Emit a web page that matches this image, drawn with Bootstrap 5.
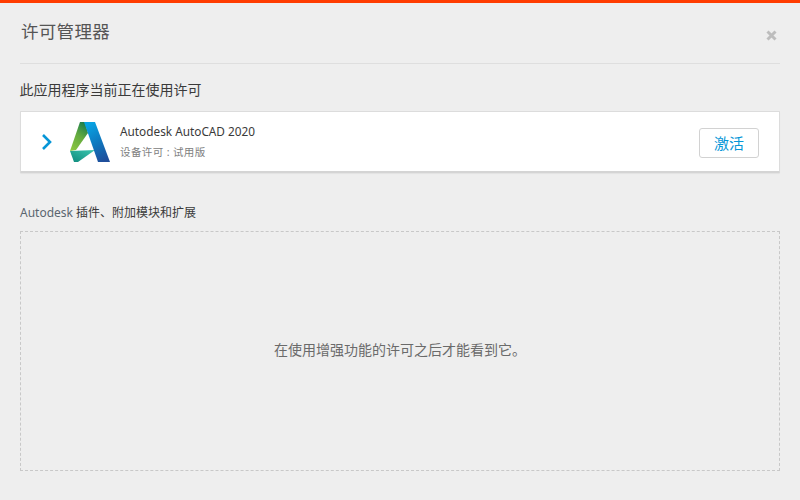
<!DOCTYPE html>
<html lang="zh">
<head>
<meta charset="utf-8">
<title>许可管理器</title>
<link href="https://cdn.jsdelivr.net/npm/bootstrap@5.3.0/dist/css/bootstrap.min.css" rel="stylesheet">
<style>
html,body{height:100%}
body{background:#eee;font-family:"Noto Sans","Noto Sans CJK SC",sans-serif;color:#3c3c3c;border-top:3px solid #ff3c00;overflow:hidden}
.shell{padding:0 20px;height:497px}
.head{height:61px;border-bottom:1px solid #dedede;padding-left:1px}
.ttl{font-size:17.5px;line-height:24px;margin:16px 0 0;font-weight:400;color:#555;letter-spacing:.3px}
.closer{width:11px;height:11px;margin:26px 3px 0 0;display:block;background:none;border:0;padding:0;margin-top:19px}
.sec{font-size:14px;line-height:20px;margin:0;font-weight:400;color:#3a3a3a}
.sec1{margin-top:16px;margin-left:-.5px}
.lic{height:62px;margin-top:11px;background:#fff;border:1px solid #dcdcdc;border-bottom:2px solid #d4d4d4;box-shadow:0 1px 1px rgba(0,0,0,.05);border-radius:1px}
.chev{width:12px;height:18px;margin-left:20px;margin-right:17px}
.logo{width:40px;height:40px;margin-right:10px}
.nm{font-size:11.8px;line-height:16px;color:#3a3a3a;margin-top:-2px}
.sb{font-size:10.5px;line-height:14px;color:#808080;margin-top:6px;letter-spacing:.38px}
.act{width:60px;height:30px;margin:2px 20px 0 0;padding:0;font-size:15px;line-height:28px;color:#0696d7;background:#fff;border:1px solid #d2d2d2;border-radius:3px}
.sec2{margin-top:31px;font-size:12px;line-height:18px}
.adsk{color:#5b6670}
.drop{height:240px;margin-top:9px;border:1px dashed #c8c8c8;font-size:14px;color:#6a6a6a;padding-bottom:4px}
</style>
</head>
<body>
<div class="shell">
  <div class="head d-flex justify-content-between align-items-start">
    <h1 class="ttl">许可管理器</h1>
    <button class="closer" type="button" aria-label="关闭">
      <svg width="11" height="11" viewBox="0 0 11 11"><path d="M1.5 1.5l8 8M9.5 1.5l-8 8" stroke="#bdbdbd" stroke-width="3"/></svg>
    </button>
  </div>
  <h2 class="sec sec1">此应用程序当前正在使用许可</h2>
  <div class="lic d-flex align-items-center">
    <svg class="chev flex-shrink-0" viewBox="0 0 12 18"><path d="M2 2l7 7-7 7" fill="none" stroke="#0696d7" stroke-width="2.6"/></svg>
    <svg class="logo flex-shrink-0" viewBox="0 0 40 40">
      <defs>
        <linearGradient id="g1" x1="0.2" y1="1" x2="0.7" y2="0"><stop offset="0" stop-color="#8cc63f"/><stop offset=".55" stop-color="#62a93f"/><stop offset="1" stop-color="#1d7f4d"/></linearGradient>
        <linearGradient id="g2" x1="0.3" y1="0" x2="0.7" y2="1"><stop offset="0" stop-color="#08a4e4"/><stop offset=".55" stop-color="#0f75bc"/><stop offset="1" stop-color="#1f4e9b"/></linearGradient>
        <linearGradient id="g3" x1="1" y1="0" x2="0" y2="1"><stop offset="0" stop-color="#3cc7b0"/><stop offset="1" stop-color="#0f8a7c"/></linearGradient>
      </defs>
      <path d="M10 0H15L18 11L6 28L0 29Z" fill="url(#g1)"/>
      <path d="M0 29L25 28L8 40H4Z" fill="url(#g3)"/>
      <path d="M14 0H25L40 40H28Z" fill="url(#g2)"/>
    </svg>
    <div class="flex-grow-1">
      <div class="nm">Autodesk AutoCAD 2020</div>
      <div class="sb">设备许可 : 试用版</div>
    </div>
    <button class="act" type="button">激活</button>
  </div>
  <h2 class="sec sec2"><span class="adsk">Autodesk</span> 插件、附加模块和扩展</h2>
  <div class="drop d-flex align-items-center justify-content-center">在使用增强功能的许可之后才能看到它。</div>
</div>
<script src="https://cdn.jsdelivr.net/npm/bootstrap@5.3.0/dist/js/bootstrap.bundle.min.js"></script>
</body>
</html>
